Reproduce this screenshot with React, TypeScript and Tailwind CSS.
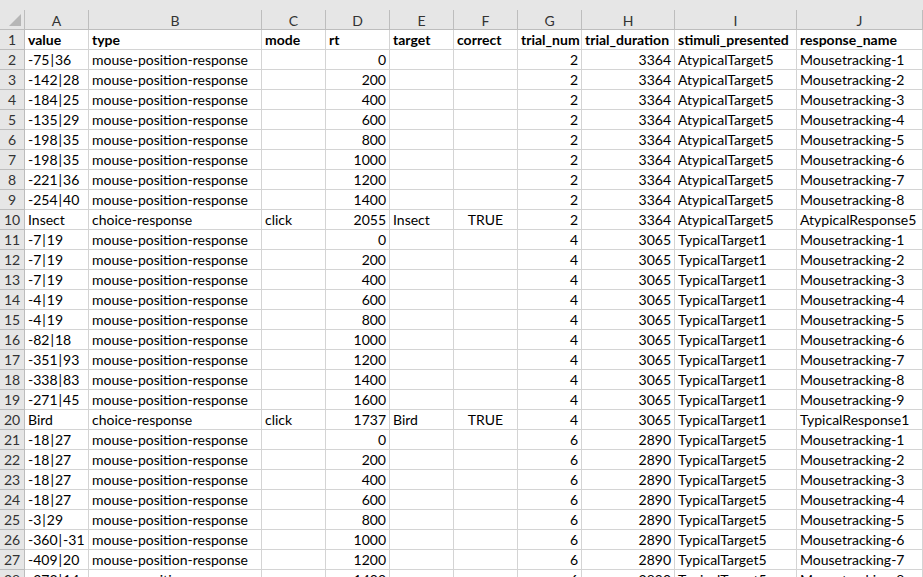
import React from "react";

const cols = ["A", "B", "C", "D", "E", "F", "G", "H", "I", "J"];
// text alignment per column: l = left, r = right (numbers), c = center
const align = ["l", "l", "l", "r", "l", "c", "r", "r", "l", "l"];

const header = [
  "value",
  "type",
  "mode",
  "rt",
  "target",
  "correct",
  "trial_num",
  "trial_duration",
  "stimuli_presented",
  "response_name",
];

const mp = "mouse-position-response";

const mouse = (value: string, rt: string, trial: string, dur: string, stim: string, n: number) => [
  value,
  mp,
  "",
  rt,
  "",
  "",
  trial,
  dur,
  stim,
  `Mousetracking-${n}`,
];

const rows: string[][] = [
  mouse("-75|36", "0", "2", "3364", "AtypicalTarget5", 1),
  mouse("-142|28", "200", "2", "3364", "AtypicalTarget5", 2),
  mouse("-184|25", "400", "2", "3364", "AtypicalTarget5", 3),
  mouse("-135|29", "600", "2", "3364", "AtypicalTarget5", 4),
  mouse("-198|35", "800", "2", "3364", "AtypicalTarget5", 5),
  mouse("-198|35", "1000", "2", "3364", "AtypicalTarget5", 6),
  mouse("-221|36", "1200", "2", "3364", "AtypicalTarget5", 7),
  mouse("-254|40", "1400", "2", "3364", "AtypicalTarget5", 8),
  ["Insect", "choice-response", "click", "2055", "Insect", "TRUE", "2", "3364", "AtypicalTarget5", "AtypicalResponse5"],
  mouse("-7|19", "0", "4", "3065", "TypicalTarget1", 1),
  mouse("-7|19", "200", "4", "3065", "TypicalTarget1", 2),
  mouse("-7|19", "400", "4", "3065", "TypicalTarget1", 3),
  mouse("-4|19", "600", "4", "3065", "TypicalTarget1", 4),
  mouse("-4|19", "800", "4", "3065", "TypicalTarget1", 5),
  mouse("-82|18", "1000", "4", "3065", "TypicalTarget1", 6),
  mouse("-351|93", "1200", "4", "3065", "TypicalTarget1", 7),
  mouse("-338|83", "1400", "4", "3065", "TypicalTarget1", 8),
  mouse("-271|45", "1600", "4", "3065", "TypicalTarget1", 9),
  ["Bird", "choice-response", "click", "1737", "Bird", "TRUE", "4", "3065", "TypicalTarget1", "TypicalResponse1"],
  mouse("-18|27", "0", "6", "2890", "TypicalTarget5", 1),
  mouse("-18|27", "200", "6", "2890", "TypicalTarget5", 2),
  mouse("-18|27", "400", "6", "2890", "TypicalTarget5", 3),
  mouse("-18|27", "600", "6", "2890", "TypicalTarget5", 4),
  mouse("-3|29", "800", "6", "2890", "TypicalTarget5", 5),
  mouse("-360|-31", "1000", "6", "2890", "TypicalTarget5", 6),
  mouse("-409|20", "1200", "6", "2890", "TypicalTarget5", 7),
  mouse("-373|14", "1400", "6", "2890", "TypicalTarget5", 8),
];

const alignCls = (a: string) =>
  a === "r" ? "justify-end" : a === "c" ? "justify-center" : "justify-start";

// Calibri draws the pipe with wide side bearings, so pad it a little
function CellText({ text }: { text: string }) {
  if (!text.includes("|")) return <>{text}</>;
  const [l, r] = text.split("|");
  return (
    <>
      {l}
      <span className="px-[1px]">|</span>
      {r}
    </>
  );
}

function Cell({ text, a, bold }: { text: string; a: string; bold?: boolean }) {
  return (
    <div
      className={`flex items-end h-[20px] px-[3px] border-r border-b border-[#d4d4d4] bg-white whitespace-nowrap ${alignCls(a)} ${bold ? "font-bold" : ""}`}
    >
      <CellText text={text} />
    </div>
  );
}

function RowHead({ n }: { n: number }) {
  return (
    <div className="flex items-end justify-center h-[20px] bg-[#e6e6e6] border-r border-b border-[#bdbdbd] text-[#333]">
      {n}
    </div>
  );
}

export default function App() {
  return (
    <div
      className="w-[923px] h-[577px] overflow-hidden bg-white text-[14px] leading-[18px] text-black"
      style={{ fontFamily: "Lato, 'Liberation Sans', sans-serif" }}
    >
      {/* strip above the column letters */}
      <div className="h-[10px] bg-[#e6e6e6]" />

      <div className="grid grid-cols-[25px_64px_173px_64px_64px_64px_64px_64px_93px_122px_1fr]">
        {/* corner */}
        <div className="relative h-[20px] bg-[#e6e6e6] border-r border-b border-[#bdbdbd]">
          <div className="absolute right-[3px] bottom-[3px] w-0 h-0 border-l-[12px] border-l-transparent border-b-[12px] border-b-[#b6b6b6]" />
        </div>
        {cols.map((c) => (
          <div
            key={c}
            className="flex items-center justify-center h-[20px] pt-[2px] bg-[#e6e6e6] border-r border-b border-[#bdbdbd] text-[#333]"
          >
            {c}
          </div>
        ))}

        {/* row 1: header */}
        <RowHead n={1} />
        {header.map((h, i) => (
          <Cell key={i} text={h} a="l" bold />
        ))}

        {rows.map((r, ri) => (
          <React.Fragment key={ri}>
            <RowHead n={ri + 2} />
            {r.map((v, ci) => (
              <Cell key={ci} text={v} a={align[ci]} />
            ))}
          </React.Fragment>
        ))}
      </div>
    </div>
  );
}
